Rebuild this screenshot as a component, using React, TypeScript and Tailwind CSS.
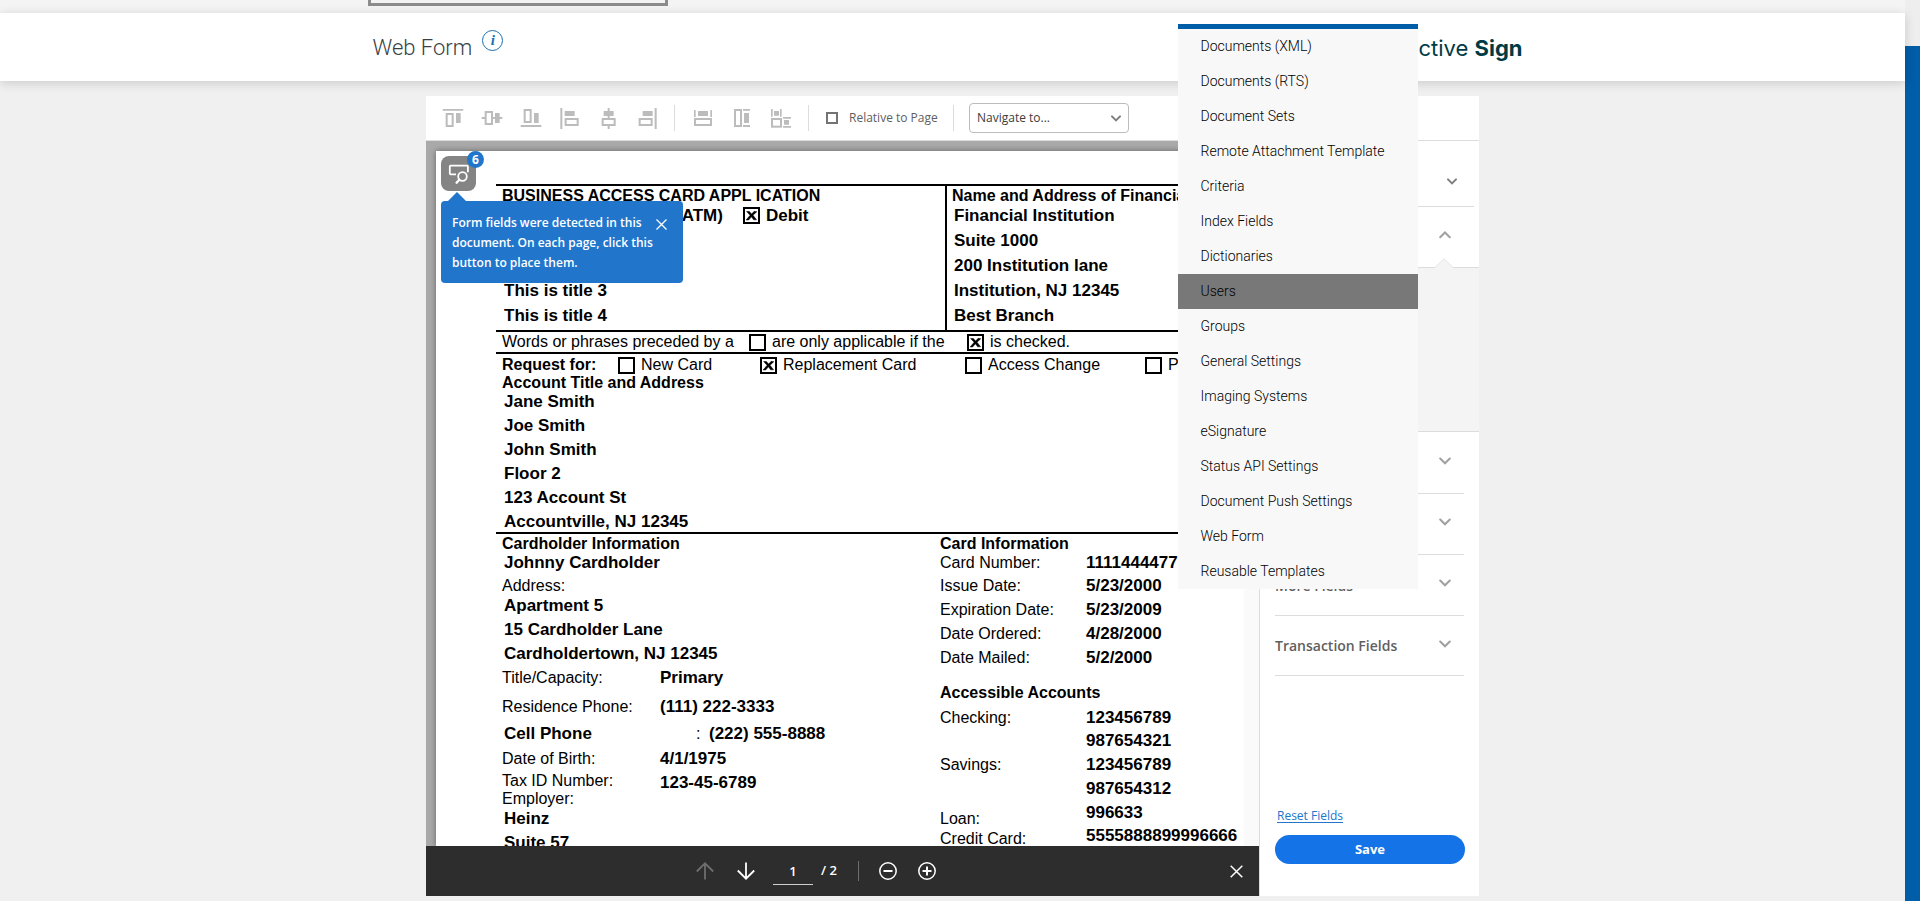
import React from "react";

const MENU_ITEMS = [
  "Documents (XML)",
  "Documents (RTS)",
  "Document Sets",
  "Remote Attachment Template",
  "Criteria",
  "Index Fields",
  "Dictionaries",
  "Users",
  "Groups",
  "General Settings",
  "Imaging Systems",
  "eSignature",
  "Status API Settings",
  "Document Push Settings",
  "Web Form",
  "Reusable Templates",
];

type Rect = [number, number, number, number];

/* Alignment icons: solid bars plus one outlined box, on a 66-unit grid. */
function AlignIcon({ solid, outline }: { solid: Rect[]; outline: Rect }) {
  const [x, y, w, h] = outline;
  return (
    <svg viewBox="0 0 66 66" className="size-[22px]" aria-hidden="true">
      {solid.map(([sx, sy, sw, sh], i) => (
        <rect key={i} x={sx} y={sy} width={sw} height={sh} rx="1" fill="#bcbcbc" />
      ))}
      <rect x={x + 3} y={y + 3} width={w - 6} height={h - 6} fill="#fff" stroke="#bcbcbc" strokeWidth="6" />
    </svg>
  );
}

type Tool = { name: string; solid: Rect[]; outline: Rect };

const ALIGN_TOOLS: Tool[] = [
  { name: "Align top", solid: [[2, 6, 62, 5], [42, 18, 14, 30]], outline: [11, 18, 24, 42] },
  { name: "Align middle", solid: [[2, 30, 62, 6], [42, 18, 14, 30]], outline: [11, 12, 25, 42] },
  { name: "Align bottom", solid: [[2, 54, 62, 6], [42, 18, 14, 30]], outline: [11, 6, 24, 42] },
  { name: "Align left", solid: [[4, 3, 6, 63], [17, 12, 30, 15]], outline: [17, 33, 42, 24] },
  { name: "Align center", solid: [[29, 3, 6, 63], [17, 12, 30, 15]], outline: [11, 33, 42, 24] },
  { name: "Align right", solid: [[53, 3, 6, 63], [17, 12, 30, 15]], outline: [5, 33, 42, 24] },
];

const SIZE_TOOLS: Tool[] = [
  { name: "Match width", solid: [[6, 9, 5, 21], [55, 9, 5, 21], [18, 12, 30, 15]], outline: [6, 33, 54, 24] },
  { name: "Match height", solid: [[36, 6, 21, 5], [36, 54, 21, 6], [39, 18, 15, 30]], outline: [9, 6, 24, 54] },
  {
    name: "Match size",
    solid: [[3, 6, 5, 23], [30, 6, 5, 23], [12, 12, 15, 14], [39, 30, 24, 5], [42, 39, 15, 14], [39, 57, 24, 5]],
    outline: [3, 33, 33, 29],
  },
];

function ToolButtons({ tools }: { tools: Tool[] }) {
  return (
    <div className="flex">
      {tools.map((t) => (
        <button key={t.name} aria-label={t.name} className="flex w-[39px] items-center justify-center">
          <AlignIcon solid={t.solid} outline={t.outline} />
        </button>
      ))}
    </div>
  );
}

function Chevron({ up = false, small = false }: { up?: boolean; small?: boolean }) {
  return (
    <svg
      viewBox="0 0 12 8"
      className={small ? "h-[7px] w-[10px]" : "h-2 w-3"}
      fill="none"
      stroke={small ? "#7d7d7d" : "#a0a0a0"}
      strokeWidth={small ? 2.4 : 2}
      strokeLinecap="round"
      aria-hidden="true"
    >
      <path d={up ? "M1.2 6.3 6 1.5l4.8 4.8" : "M1.2 1.5 6 6.3l4.8-4.8"} />
    </svg>
  );
}

function Toolbar() {
  return (
    <div className="flex h-[45px] shrink-0 items-center border-b border-[#dcdcdc] bg-white pl-[7px]">
      <ToolButtons tools={ALIGN_TOOLS} />
      <span className="ml-[7px] mr-2 h-[26px] w-px bg-[#dcdcdc]" />
      <ToolButtons tools={SIZE_TOOLS} />
      <span className="ml-2 h-[26px] w-px bg-[#dcdcdc]" />
      <label className="ml-[17px] flex w-[127px] items-center gap-[11px] whitespace-nowrap text-xs text-[#5e5e5e]">
        <input type="checkbox" className="size-3 appearance-none border-2 border-[#747474] bg-white" />
        Relative to Page
      </label>
      <span className="h-[26px] w-px bg-[#dcdcdc]" />
      <div className="ml-[15px] grid w-[160px] items-center">
        <select
          aria-label="Navigate to"
          className="col-start-1 row-start-1 h-[30px] w-full appearance-none rounded-[4px] border border-[#bcbcbc] bg-white pl-[7px] text-xs text-[#3c3c3c]"
        >
          <option>Navigate to...</option>
        </select>
        <span className="pointer-events-none col-start-1 row-start-1 mr-2 justify-self-end">
          <Chevron small />
        </span>
      </div>
    </div>
  );
}

function Box({ label, checked = false, bold = false }: { label: string; checked?: boolean; bold?: boolean }) {
  return (
    <label className="flex items-center gap-[6px] whitespace-nowrap">
      <span className="grid">
        <input
          type="checkbox"
          defaultChecked={checked}
          className="col-start-1 row-start-1 size-[17px] appearance-none border-2 border-black bg-white"
        />
        {checked && (
          <svg viewBox="0 0 17 17" className="pointer-events-none col-start-1 row-start-1 size-[17px]" aria-hidden="true">
            <path d="M3.600 4.500h2.800l2.200 2.600 2.600-2.800 2.600.4-3.800 3.500 3.600 4.600h-3L8.500 9.800 5.600 13H3.100l4-4.700z" fill="#000" stroke="#000" strokeWidth=".5" />
          </svg>
        )}
      </span>
      <span className={bold ? "text-[17px] font-bold" : ""}>{label}</span>
    </label>
  );
}

function Lines({ items, className }: { items: string[]; className: string }) {
  return (
    <div className={"pl-2 text-[17px] font-bold " + className}>
      {items.map((t) => (
        <p key={t}>{t}</p>
      ))}
    </div>
  );
}

function Row({
  label,
  value,
  row,
  col,
  labelClass = "",
}: {
  label: string;
  value: string;
  row: string;
  col: string;
  labelClass?: string;
}) {
  return (
    <div className={"flex " + row}>
      <dt className={col + " " + labelClass}>{label}</dt>
      <dd className="text-[17px] font-bold">{value}</dd>
    </div>
  );
}

function DocumentPage() {
  return (
    <article className="h-full flex-1 overflow-hidden bg-white pl-[60px] pt-[33px] font-['Liberation_Sans',Arial,sans-serif] text-base whitespace-nowrap text-black shadow-[0_0_6px_rgba(0,0,0,0.4)]">
      <section className="flex border-t-2 border-black">
        <div className="w-[449px] shrink-0 pb-[2px]">
          <h2 className="h-[17px] pl-[6px] font-bold leading-[19px]">BUSINESS ACCESS CARD APPL ICATION</h2>
          <div className="flex h-[25px] items-center pl-[180px]">
            <span className="w-[67px] text-[17px] font-bold">(ATM)</span>
            <Box label="Debit" checked bold />
          </div>
          <Lines items={["This is title 3", "This is title 4"]} className="pt-[50px] leading-[25px]" />
        </div>
        <div className="flex-1 border-l-2 border-black pb-[2px]">
          <h2 className="h-[17px] pl-[5px] font-bold leading-[19px]">Name and Address of Financial</h2>
          <Lines
            items={["Financial Institution", "Suite 1000", "200 Institution lane", "Institution, NJ 12345", "Best Branch"]}
            className="-ml-px leading-[25px]"
          />
        </div>
      </section>

      <section className="flex h-[22px] items-center border-t-2 border-black pl-[6px]">
        <span className="w-[247px]">Words or phrases preceded by a</span>
        <div className="w-[218px]">
          <Box label="are only applicable if the" />
        </div>
        <Box label="is checked." checked />
      </section>

      <section className="border-t-2 border-black">
        <div className="flex h-[22px] items-center pl-[6px]">
          <span className="w-[116px] font-bold">Request for:</span>
          <div className="w-[142px]">
            <Box label="New Card" />
          </div>
          <div className="w-[205px]">
            <Box label="Replacement Card" checked />
          </div>
          <div className="w-[180px]">
            <Box label="Access Change" />
          </div>
          <Box label="P" />
        </div>
        <h2 className="pl-[6px] font-bold leading-[14px]">Account Title and Address</h2>
        <Lines
          items={["Jane Smith", "Joe Smith", "John Smith", "Floor 2", "123 Account St", "Accountville, NJ 12345"]}
          className="-mb-[2px] leading-6"
        />
      </section>

      <section className="flex border-t-2 border-black pl-[6px]">
        <div className="w-[438px] shrink-0">
          <h2 className="font-bold leading-[19px]">Cardholder Information</h2>
          <p className="h-[21px] pl-[2px] text-[17px] font-bold leading-5">Johnny Cardholder</p>
          <p className="h-5 leading-6">Address:</p>
          <div className="pl-[2px] text-[17px] font-bold leading-6">
            <p>Apartment 5</p>
            <p>15 Cardholder Lane</p>
            <p>Cardholdertown, NJ 12345</p>
          </div>
          <dl>
            <Row label="Title/Capacity:" value="Primary" row="leading-6" col="w-[158px]" />
            <Row label="Residence Phone:" value="(111) 222-3333" row="leading-[34px]" col="w-[158px]" />
            <div className="flex h-[22px] leading-5">
              <dt className="w-[194px] pl-[2px] text-[17px] font-bold">Cell Phone</dt>
              <dd className="flex">
                <span className="w-[13px]">:</span>
                <span className="text-[17px] font-bold">(222) 555-8888</span>
              </dd>
            </div>
            <Row label="Date of Birth:" value="4/1/1975" row="h-[25px] leading-[26px]" col="w-[158px]" />
            <Row label="Tax ID Number:" value="123-45-6789" row="h-5 leading-6" col="w-[158px]" labelClass="leading-5" />
            <Row label="Employer:" value="" row="leading-4" col="w-[158px]" />
          </dl>
          <div className="pl-[2px] text-[17px] font-bold leading-6">
            <p>Heinz</p>
            <p>Suite 57</p>
          </div>
        </div>
        <div>
          <h2 className="font-bold leading-[19px]">Card Information</h2>
          <dl>
            <Row label="Card Number:" value="1111444477" row="h-[21px] leading-5" col="w-[146px]" />
            <Row label="Issue Date:" value="5/23/2000" row="leading-6" col="w-[146px]" />
            <Row label="Expiration Date:" value="5/23/2009" row="leading-6" col="w-[146px]" />
            <Row label="Date Ordered:" value="4/28/2000" row="leading-6" col="w-[146px]" />
            <Row label="Date Mailed:" value="5/2/2000" row="leading-6" col="w-[146px]" />
          </dl>
          <h2 className="pt-[10px] font-bold leading-[26px]">Accessible Accounts</h2>
          <dl>
            <Row label="Checking:" value="123456789" row="leading-6" col="w-[146px]" />
            <Row label="" value="987654321" row="h-6 leading-[22px]" col="w-[146px]" />
            <Row label="Savings:" value="123456789" row="h-6 leading-[22px]" col="w-[146px]" />
            <Row label="" value="987654312" row="h-6 leading-[22px]" col="w-[146px]" />
            <Row label="Loan:" value="996633" row="h-6 leading-[22px]" col="w-[146px]" labelClass="leading-[34px]" />
            <Row label="Credit Card:" value="5555888899996666" row="h-6 leading-5" col="w-[146px]" labelClass="leading-[26px]" />
          </dl>
        </div>
      </section>
    </article>
  );
}

function DetectedFields() {
  return (
    <div className="absolute left-[15px] top-[15px]">
      <button aria-label="Place detected fields" className="block size-[35px] rounded-[8px] bg-[#848484]">
        <svg viewBox="0 0 35 35" className="size-[35px]" fill="none" stroke="#fff" strokeWidth="1.800" aria-hidden="true">
          <path d="M15 18.300H9.500a.7.7 0 0 1-.7-.7v-7.200a.7.700 0 0 1 .7-.7h16.700a.7.700 0 0 1 .7.700v5.800" />
          <circle cx="21.500" cy="20.500" r="4.300" />
          <path d="m18.300 23.800-2.700 2.900" strokeLinecap="round" strokeWidth="2.400" />
        </svg>
      </button>
      <span className="absolute -top-[5px] left-[26px] flex size-[17px] items-center justify-center rounded-full bg-[#2176cc] text-xs font-bold text-white">
        6
      </span>
      <div className="absolute left-0 top-[45px] w-[242px]">
        <svg viewBox="0 0 18 9" className="absolute -top-[9px] left-[7px] h-[9px] w-[18px]" aria-hidden="true">
          <path d="M0 9 9 0l9 9z" fill="#2176cc" />
        </svg>
        <div className="flex items-start justify-between rounded-[4px] bg-[#2176cc] pb-[10px] pl-[11px] pr-4 pt-3 text-white">
          <p className="whitespace-nowrap text-xs font-semibold leading-5">
            Form fields were detected in this
            <br />
            document. On each page, click this
            <br />
            button to place them.
          </p>
          <button aria-label="Dismiss" className="-ml-3 mt-[6px]">
            <svg viewBox="0 0 11 11" className="size-[11px]" stroke="#fff" strokeWidth="1.300" aria-hidden="true">
              <path d="m.5.5 10 10m0-10-10 10" />
            </svg>
          </button>
        </div>
      </div>
    </div>
  );
}

function PagerBar() {
  return (
    <footer className="flex h-[50px] shrink-0 items-center bg-[#2d2d2d] pr-4 text-white">
      <div className="ml-[270px] flex items-center">
        <button aria-label="Previous page" className="mr-[23px]">
          <svg viewBox="0 0 18 18" className="size-[18px]" fill="none" stroke="#6e6e6e" strokeWidth="1.800" aria-hidden="true">
            <path d="M9 17.500V1.500M.8 9.500 9 1.300l8.200 8.200" />
          </svg>
        </button>
        <button aria-label="Next page" className="mr-[18px]">
          <svg viewBox="0 0 18 18" className="size-[18px]" fill="none" stroke="#fff" strokeWidth="1.800" aria-hidden="true">
            <path d="M9 .5v16M.8 8.500 9 16.700l8.200-8.200" />
          </svg>
        </button>
        <input
          aria-label="Page number"
          defaultValue="1"
          className="h-7 w-10 border-b border-[#d0d0d0] bg-transparent text-center text-[13px] font-semibold"
        />
        <span className="ml-2 w-[37px] whitespace-pre text-[13px] font-semibold">/ 2</span>
        <span className="h-5 w-px bg-[#6e6e6e]" />
        <button aria-label="Zoom out" className="ml-5">
          <svg viewBox="0 0 18 18" className="size-[18px]" fill="none" stroke="#fff" strokeWidth="1.500" aria-hidden="true">
            <circle cx="9" cy="9" r="8.200" />
            <path d="M4.500 9h9" strokeWidth="2" />
          </svg>
        </button>
        <button aria-label="Zoom in" className="ml-[21px]">
          <svg viewBox="0 0 18 18" className="size-[18px]" fill="none" stroke="#fff" strokeWidth="1.500" aria-hidden="true">
            <circle cx="9" cy="9" r="8.200" />
            <path d="M4.500 9h9M9 4.500v9" strokeWidth="2" />
          </svg>
        </button>
      </div>
      <button aria-label="Close" className="ml-auto">
        <svg viewBox="0 0 13 13" className="size-[13px]" stroke="#fff" strokeWidth="1.500" aria-hidden="true">
          <path d="m.7.7 11.600 11.600m0-11.600L.7 12.300" />
        </svg>
      </button>
    </footer>
  );
}

function Section({ label, height }: { label: string; height: string }) {
  return (
    <button
      aria-label={label || "Expand section"}
      className={"mx-[15px] flex items-center justify-between border-b border-[#dcdcdc] pr-[13px] text-left text-sm font-semibold text-[#5f5f5f] " + height}
    >
      <span className="pt-px">{label}</span>
      <span className="-mt-1">
        <Chevron />
      </span>
    </button>
  );
}

function Sidebar() {
  return (
    <aside className="flex w-[220px] shrink-0 flex-col border-l border-[#dcdcdc] bg-white">
      <button aria-label="Recipient" className="mr-[5px] flex h-[66px] items-center justify-end border-b border-[#dcdcdc] pr-[17px] pt-4">
        <Chevron small />
      </button>
      <button aria-label="Collapse section" className="flex h-[61px] items-center justify-end border-b border-[#dcdcdc] pb-1 pr-7">
        <Chevron up />
      </button>
      <div className="relative h-[164px] border-b border-[#dcdcdc] bg-[#f4f4f4]">
        <svg viewBox="0 0 20 11" className="absolute -top-[10px] right-[25px] h-[11px] w-5" aria-hidden="true">
          <path d="M0 10.500 10 .7l10 9.800" fill="#f4f4f4" stroke="#e4e4e4" />
        </svg>
      </div>
      <Section label="" height="h-[62px]" />
      <Section label="" height="h-[61px]" />
      <Section label="More Fields" height="h-[61px]" />
      <Section label="Transaction Fields" height="h-[60px]" />
      <div className="mt-auto flex flex-col items-start px-[15px] pb-8">
        <a href="#reset" className="ml-[2px] text-xs leading-5 text-[#2176cc] underline underline-offset-2">
          Reset Fields
        </a>
        <button className="mr-[-1px] mt-[9px] h-[29px] self-stretch rounded-full bg-[#1473e6] text-[13px] font-bold text-white">Save</button>
      </div>
    </aside>
  );
}

function Header() {
  return (
    <header className="relative z-10 h-[68px] shrink-0 bg-white shadow-[0_2px_10px_rgba(0,0,0,0.16)]">
      <div className="relative mx-auto flex h-full w-full max-w-[1170px] items-center justify-between pl-[5px] pr-[15px]">
        <div className="flex items-center">
          <h1 className="font-['Roboto',sans-serif] text-[22px] font-light text-[#3a3f47]">Web Form</h1>
          <button
            aria-label="Information"
            className="mb-[14px] ml-[10px] flex size-[21px] items-center justify-center rounded-full border border-[#1a6fb0] font-['Liberation_Serif',serif] text-[15px] font-bold italic leading-none text-[#1a6fb0]"
          >
            i
          </button>
        </div>
        <div className="pt-[2px] font-['Inter',sans-serif] text-[22px] text-[#003b45]">
          ctive <span className="font-bold">Sign</span>
        </div>
        <nav className="absolute left-[810px] top-[11px] w-60 border-t-[5px] border-[#005da8] bg-[#f8f8f8]">
          <ul>
            {MENU_ITEMS.map((item) => (
              <li key={item}>
                <a
                  href="#menu"
                  className={
                    "block h-[35px] pl-[23px] font-['Roboto',sans-serif] text-sm font-light leading-[35px] text-black " +
                    (item === "Users" ? "bg-[#787879]" : "")
                  }
                >
                  {item}
                </a>
              </li>
            ))}
          </ul>
        </nav>
      </div>
    </header>
  );
}

export default function App() {
  return (
    <div className="flex h-screen overflow-hidden bg-[#f0f0f0] font-['Open_Sans',sans-serif]">
      <div className="flex min-w-0 flex-1 flex-col">
        <div className="h-[13px] shrink-0 bg-[#f4f4f4]">
          <div className="mx-auto w-full max-w-[1170px]">
            <div className="h-[6px] w-[300px] border-x-[3px] border-b-[3px] border-[#8c8c8c]" />
          </div>
        </div>
        <Header />
        <main className="mx-auto mb-[5px] mt-[15px] flex min-h-0 w-full max-w-[1053px] flex-1 flex-col">
          <Toolbar />
          <div className="flex min-h-0 flex-1">
            <div className="flex min-w-0 flex-1 flex-col">
              <div className="relative flex min-h-0 flex-1 overflow-hidden bg-[#a9a9a9] pl-[10px] pt-[10px]">
                <DocumentPage />
                <div className="z-[1] -mt-[10px] w-[15px] bg-[#fafafa]" />
                <DetectedFields />
              </div>
              <PagerBar />
            </div>
            <Sidebar />
          </div>
        </main>
      </div>
      <div className="w-[15px] shrink-0 bg-[#eeeeee] pt-[46px]">
        <div className="h-full bg-[#005da8]" />
      </div>
    </div>
  );
}
